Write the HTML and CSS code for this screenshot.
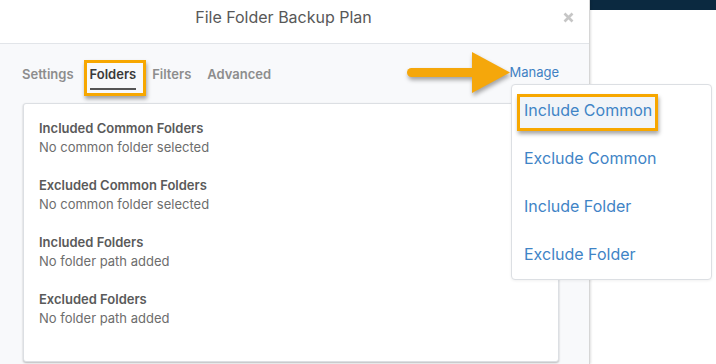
FILE: index.html
```html
<!DOCTYPE html>
<html>
<head>
<meta charset="utf-8">
<link rel="stylesheet" href="styles.css">
</head>
<body>
<div class="page">
  <div class="modal">
    <div class="modal-header">
      <span class="modal-title">File Folder Backup Plan</span>
      <span class="close" aria-label="close">
        <svg width="11" height="11" viewBox="0 0 11 11"><path d="M1.5 1.5 L9.5 9.5 M9.5 1.5 L1.5 9.5" stroke="#c6c6c6" stroke-width="2.6" stroke-linecap="butt"/></svg>
      </span>
    </div>
    <div class="modal-body">
      <div class="tabs-row">
        <div class="tabs">
          <span class="tab">Settings</span>
          <span class="tab active">Folders<span class="mark mark-tab"></span></span>
          <span class="tab">Filters</span>
          <span class="tab">Advanced</span>
        </div>
        <a class="manage">Manage</a>
      </div>
      <div class="card">
        <div class="section">
          <div class="sec-title">Included Common Folders</div>
          <div class="sec-text">No common folder selected</div>
        </div>
        <div class="section">
          <div class="sec-title">Excluded Common Folders</div>
          <div class="sec-text">No common folder selected</div>
        </div>
        <div class="section">
          <div class="sec-title">Included Folders</div>
          <div class="sec-text">No folder path added</div>
        </div>
        <div class="section">
          <div class="sec-title">Excluded Folders</div>
          <div class="sec-text">No folder path added</div>
        </div>
      </div>
    </div>
  </div>
  <div class="side">
    <div class="side-bar"></div>
  </div>

  <svg class="arrow" width="116" height="50" viewBox="0 0 116 50">
    <line x1="11.5" y1="22.5" x2="76" y2="22.5" stroke="#f5a70b" stroke-width="9" stroke-linecap="round"/>
    <polygon points="72,2 110,22.5 72,43" fill="#f5a70b"/>
  </svg>

  <div class="dropdown">
    <div class="dd-item hl">Include Common<span class="mark mark-dd"></span></div>
    <div class="dd-item">Exclude Common</div>
    <div class="dd-item">Include Folder</div>
    <div class="dd-item">Exclude Folder</div>
  </div>
</div>
</body>
</html>
```
FILE: styles.css
```css
* { box-sizing: border-box; }
html, body { margin: 0; padding: 0; }
body {
  width: 716px;
  height: 364px;
  overflow: hidden;
  background: #fff;
  font-family: Inter, "Noto Sans", sans-serif;
}
.page {
  position: relative;
  display: flex;
  width: 716px;
  height: 364px;
}
.modal {
  width: 590px;
  flex: none;
  background: #f8f9fb;
  border-right: 1px solid #d6d6d6;
  box-shadow: 1px 0 2px rgba(0,0,0,0.12);
  display: flex;
  flex-direction: column;
  position: relative;
  z-index: 1;
}
.modal-header {
  position: relative;
  height: 44px;
  background: #fff;
  border-bottom: 1px solid #e2e5e9;
  display: flex;
  align-items: center;
  justify-content: center;
  padding-right: 22px;
}
.modal-title {
  font-size: 16px;
  color: #585858;
  line-height: 20px;
  margin-top: -9px;
}
.close {
  position: absolute;
  left: 563px;
  top: 12px;
  width: 11px;
  height: 11px;
  display: block;
}
.close svg { display: block; }
.modal-body {
  flex: 1;
  padding: 21px 30px 0 22px;
  display: flex;
  flex-direction: column;
}
.tabs-row {
  display: flex;
  justify-content: space-between;
  align-items: flex-start;
}
.tabs {
  display: flex;
  gap: 16px;
}
.tab {
  position: relative;
  font-size: 13px;
  line-height: 18px;
  font-weight: 600;
  color: #8d8d8d;
  padding-bottom: 5px;
  border-bottom: 2px solid transparent;
}
.tab.active {
  color: #3a3a3a;
  border-bottom-color: #555;
}
.manage {
  font-size: 13px;
  line-height: 18px;
  color: #3f81c3;
  margin-top: -2px;
}
.mark {
  position: absolute;
  border: 3px solid #f7a700;
  box-shadow: 1px 3px 4px rgba(0,0,0,0.35);
  pointer-events: none;
}
.mark-tab {
  left: -6px;
  top: -5px;
  width: 62px;
  height: 36px;
}
.card {
  margin-top: 13px;
  margin-left: 1px;
  height: 259px;
  background: #fff;
  border: 1px solid #dcdfe3;
  border-radius: 3px;
  padding: 15px 15px 0 15px;
  display: flex;
  flex-direction: column;
  gap: 20px;
  box-shadow: 0 1px 2px rgba(0,0,0,0.25);
}
.sec-title {
  font-size: 13px;
  line-height: 18px;
  font-weight: 600;
  color: #5a5a5a;
}
.sec-text {
  margin-top: 1px;
  font-size: 13px;
  line-height: 18px;
  color: #6d6d6d;
}
.side {
  flex: 1;
  background: #fff;
}
.side-bar {
  height: 10px;
  background: #0b2940;
}
.arrow {
  position: absolute;
  left: 400px;
  top: 50px;
  z-index: 3;
  filter: drop-shadow(1px 3px 2px rgba(0,0,0,0.35));
}
.dropdown {
  position: absolute;
  left: 511px;
  top: 84px;
  width: 201px;
  background: #fff;
  border: 1px solid #dcdfe3;
  border-radius: 4px;
  padding: 1px 0;
  z-index: 3;
  box-shadow: 0 1px 3px rgba(0,0,0,0.06);
}
.dd-item {
  position: relative;
  height: 48px;
  line-height: 48px;
  padding-left: 12px;
  font-size: 16px;
  color: #3f84c6;
}
.dd-item.hl::before {
  content: "";
  position: absolute;
  left: 8px;
  top: 10px;
  width: 137px;
  height: 33px;
  background: #f1f4f8;
  z-index: -1;
}
.dd-item.hl { z-index: 0; }
.mark-dd {
  left: 5px;
  top: 8px;
  width: 141px;
  height: 37px;
}
```
